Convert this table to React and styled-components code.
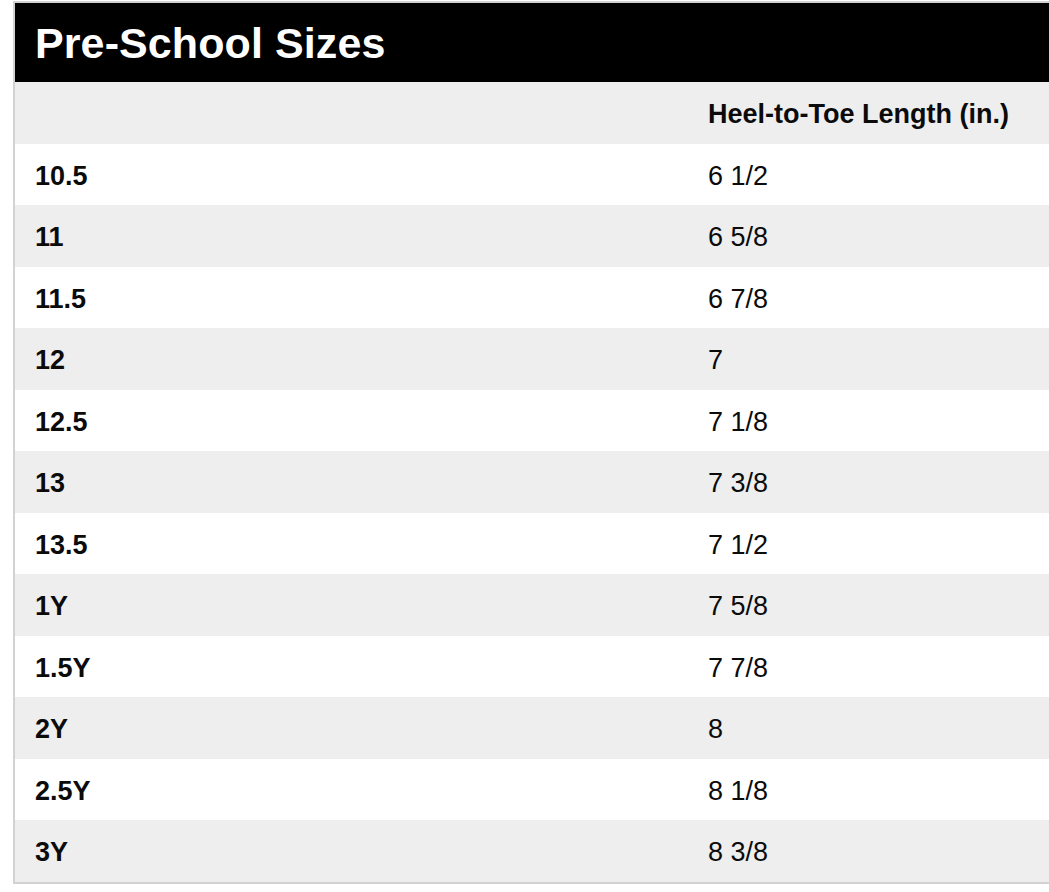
import React from 'react';
import styled, { createGlobalStyle } from 'styled-components';

const GlobalStyle = createGlobalStyle`
  html, body {
    margin: 0;
    padding: 0;
    background: #fff;
    overflow: hidden;
  }
  body {
    font-family: "Liberation Sans", Arial, Helvetica, sans-serif;
  }
`;

const Page = styled.div`
  padding: 1px 0 0 13px;
  width: 1049px;
  height: 892px;
  box-sizing: border-box;
`;

const Chart = styled.div`
  width: 1060px;
  border: 2px solid #d2d2d2;
  border-right: none;
  background: #fff;
`;

const Title = styled.h2`
  margin: 0;
  height: 79px;
  background: #000;
  color: #fff;
  display: flex;
  align-items: center;
  padding: 2px 0 0 20px;
  box-sizing: border-box;
  font-size: 43px;
  font-weight: 700;
  letter-spacing: 0.1px;
`;

const Row = styled.div`
  display: grid;
  grid-template-columns: 674px 1fr;
  height: 61.5px;
  align-items: center;
  background: ${p => (p.$shaded ? '#eeeeee' : '#ffffff')};
`;

const Cell = styled.div`
  padding: 4px 0 0 ${p => (p.$first ? '20px' : '19px')};
  font-size: 27px;
  font-weight: ${p => (p.$bold ? 700 : 400)};
  color: #0b0b0b;
  white-space: nowrap;
`;

const sizes = [
  ['10.5', '6 1/2'],
  ['11', '6 5/8'],
  ['11.5', '6 7/8'],
  ['12', '7'],
  ['12.5', '7 1/8'],
  ['13', '7 3/8'],
  ['13.5', '7 1/2'],
  ['1Y', '7 5/8'],
  ['1.5Y', '7 7/8'],
  ['2Y', '8'],
  ['2.5Y', '8 1/8'],
  ['3Y', '8 3/8'],
];

export default function App() {
  return (
    <Page>
      <GlobalStyle />
      <Chart>
        <Title>Pre-School Sizes</Title>
        <Row $shaded>
          <Cell $first $bold></Cell>
          <Cell $bold>Heel-to-Toe Length (in.)</Cell>
        </Row>
        {sizes.map(([size, length], i) => (
          <Row key={size} $shaded={i % 2 === 1}>
            <Cell $first $bold>{size}</Cell>
            <Cell>{length}</Cell>
          </Row>
        ))}
      </Chart>
    </Page>
  );
}
